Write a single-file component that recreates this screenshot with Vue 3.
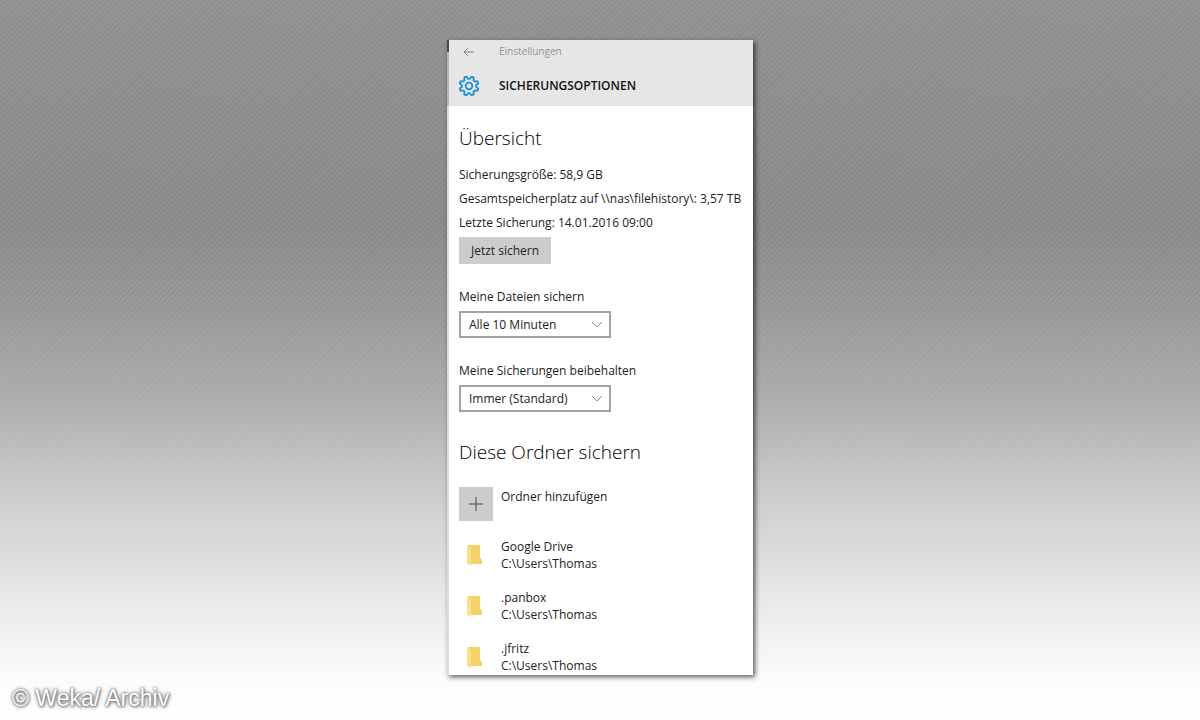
<script setup>
import { ref } from 'vue'

const interval = ref('Alle 10 Minuten')
const retention = ref('Immer (Standard)')
const intervals = ['Alle 10 Minuten', 'Alle 15 Minuten', 'Stündlich', 'Täglich']
const retentions = ['Immer (Standard)', '1 Monat', '1 Jahr', 'Bis Platz benötigt wird']
const facts = [
  'Sicherungsgröße: 58,9 GB',
  'Gesamtspeicherplatz auf \\\\nas\\filehistory\\: 3,57 TB',
  'Letzte Sicherung: 14.01.2016 09:00',
]
const folders = [
  { name: 'Google Drive', path: 'C:\\Users\\Thomas' },
  { name: '.panbox', path: 'C:\\Users\\Thomas' },
  { name: '.jfritz', path: 'C:\\Users\\Thomas' },
]

// Outline of a cog with eight rounded teeth around the centre of a 22-unit box
function cogPath() {
  const parts = []
  const steps = 96
  for (let i = 0; i < steps; i++) {
    const a = (i / steps) * Math.PI * 2
    const wave = Math.tanh(2.6 * Math.cos(8 * (a - Math.PI / 8)))
    const r = 8.4 + 1.3 * wave
    parts.push(`${(11 + r * Math.cos(a)).toFixed(2)} ${(11 + r * Math.sin(a)).toFixed(2)}`)
  }
  return `M${parts.join('L')}Z`
}
const cog = cogPath()
</script>

<template>
  <div class="stage">
    <main class="window">
      <header class="head">
        <div class="titlebar">
          <button class="back" type="button" aria-label="Zurück">
            <svg viewBox="0 0 12 10" width="12" height="10">
              <path d="M11 5H1M5 1L1 5l4 4" />
            </svg>
          </button>
          <span>Einstellungen</span>
        </div>
        <div class="heading">
          <svg class="cog" viewBox="0 0 22 22" width="22" height="22" aria-hidden="true">
            <path :d="cog" />
            <circle cx="11" cy="11" r="3.3" />
          </svg>
          <h1>SICHERUNGSOPTIONEN</h1>
        </div>
      </header>

      <div class="body">
        <section>
          <h2>Übersicht</h2>
          <p v-for="fact in facts" :key="fact" class="fact">{{ fact }}</p>
          <button class="backup" type="button">Jetzt sichern</button>
        </section>

        <div class="field">
          <label for="interval">Meine Dateien sichern</label>
          <div class="combo">
            <select id="interval" v-model="interval">
              <option v-for="o in intervals" :key="o">{{ o }}</option>
            </select>
            <svg viewBox="0 0 12 7" width="12" height="7" aria-hidden="true"><path d="M1 1l5 5 5-5" /></svg>
          </div>
        </div>

        <div class="field">
          <label for="retention">Meine Sicherungen beibehalten</label>
          <div class="combo">
            <select id="retention" v-model="retention">
              <option v-for="o in retentions" :key="o">{{ o }}</option>
            </select>
            <svg viewBox="0 0 12 7" width="12" height="7" aria-hidden="true"><path d="M1 1l5 5 5-5" /></svg>
          </div>
        </div>

        <section class="folders">
          <h2>Diese Ordner sichern</h2>
          <button class="add" type="button">
            <span class="plus">
              <svg viewBox="0 0 14 14" width="14" height="14"><path d="M7 0v14M0 7h14" /></svg>
            </span>
            <span class="add-label">Ordner hinzufügen</span>
          </button>
          <ul>
            <li v-for="f in folders" :key="f.name">
              <svg class="folder" viewBox="0 0 16 21" width="16" height="21" aria-hidden="true">
                <path d="M1 0h12v13l2 2v4H1z" fill="#f5d267" />
                <path d="M9 0h4v13l2 2v4H9z" fill="#f5d062" />
                <path d="M0 1l4 2v18l-4-2z" fill="#fbe08c" />
              </svg>
              <div>
                <div>{{ f.name }}</div>
                <div>{{ f.path }}</div>
              </div>
            </li>
          </ul>
        </section>
      </div>
    </main>
    <footer class="credit">© Weka/ Archiv</footer>
  </div>
</template>

<style>
body {
  margin: 0;
}
</style>

<style scoped>
.stage {
  position: relative;
  box-sizing: border-box;
  min-height: 100vh;
  padding: 40px 16px 45px;
  display: flex;
  justify-content: center;
  align-items: flex-start;
  background: linear-gradient(180deg, #949494 0%, #8f8f8f 20%, #8d8d8d 31%, #999999 42%, #afafaf 55%, #cacaca 67%, #dedede 78%, #f2f2f2 88%, #fcfcfc 95%, #ffffff 100%);
  font-family: "Open Sans", "Noto Sans", sans-serif;
  font-size: 12px;
  line-height: 17px;
  color: #222;
}
.stage::before {
  content: "";
  position: absolute;
  inset: 0;
  background: repeating-linear-gradient(135deg, rgba(0, 0, 0, 0.03) 0 2px, rgba(255, 255, 255, 0.02) 2px 4px);
  mask-image: linear-gradient(180deg, #000 40%, transparent 75%);
}
.window {
  position: relative;
  box-sizing: border-box;
  width: 100%;
  max-width: 306px;
  border-left: 2px solid #dcdcdc;
  background: #fff;
  box-shadow: 2px 2px 5px rgba(0, 0, 0, 0.65);
}
.window::before {
  content: "";
  position: absolute;
  left: -2px;
  top: 0;
  width: 2px;
  height: 66px;
  background: linear-gradient(180deg, #2d4f7c 0 12px, #b4b4b4 12px 100%);
}
button,
select {
  font: inherit;
  color: inherit;
  border: 0;
  border-radius: 0;
  margin: 0;
  padding: 0;
}
.head {
  background: #e6e6e6;
  padding: 3px 9px 9px;
}
.titlebar,
.heading {
  display: grid;
  grid-template-columns: 41px 1fr;
  align-items: center;
}
.titlebar {
  font-size: 10px;
  color: #929292;
}
.back {
  display: flex;
  width: 22px;
  height: 17px;
  align-items: center;
  justify-content: center;
  background: none;
}
.back path {
  fill: none;
  stroke: #858585;
}
.heading {
  margin-top: 15px;
}
.cog path,
.cog circle {
  fill: none;
  stroke: #1c8fd6;
  stroke-width: 1.8;
}
.cog {
  display: block;
}
h1 {
  margin: 0;
  font-size: 12px;
  line-height: 22px;
  font-weight: 600;
  color: #111;
}
.body {
  padding: 18px 10px 1px;
}
h2 {
  margin: 0;
  font-size: 19px;
  line-height: 28px;
  font-weight: 300;
  color: #000;
}
section > h2 {
  margin-bottom: 11px;
}
.fact {
  margin: 0;
  line-height: 24px;
  white-space: nowrap;
}
.backup {
  display: block;
  height: 27px;
  padding: 0 12px;
  margin-top: 2px;
  background: #ccc;
}
.field {
  margin-top: 24px;
}
.field label {
  display: block;
  line-height: 18px;
}
.combo {
  display: flex;
  align-items: center;
  width: 152px;
  margin-top: 5px;
}
.combo select {
  appearance: none;
  width: 152px;
  height: 27px;
  padding: 0 24px 0 8px;
  border: 2px solid #a2a2a2;
  background: #fff;
}
.combo svg {
  flex: none;
  margin-left: -20px;
  pointer-events: none;
}
.combo path {
  fill: none;
  stroke: #888;
}
.folders {
  margin-top: 26px;
}
.folders h2 {
  margin-bottom: 21px;
}
.add {
  display: flex;
  gap: 8px;
  background: none;
  text-align: left;
}
.add-label {
  padding-top: 1px;
}
.plus {
  display: flex;
  width: 34px;
  height: 34px;
  align-items: center;
  justify-content: center;
  background: #ccc;
}
.plus path {
  stroke: #444;
}
ul {
  list-style: none;
  margin: 17px 0 0;
  padding: 0;
  display: grid;
  gap: 17px;
}
li {
  display: grid;
  grid-template-columns: 34px 1fr;
  column-gap: 8px;
  align-items: center;
}
.folder {
  margin-left: 8px;
}
.credit {
  position: absolute;
  left: 12px;
  bottom: 9px;
  font-family: "Liberation Sans", Arial, sans-serif;
  font-size: 23px;
  line-height: 26px;
  color: #fff;
  text-shadow: 0 0 2px #666, 1px 1px 3px #777, 0 0 4px #888;
}
</style>
